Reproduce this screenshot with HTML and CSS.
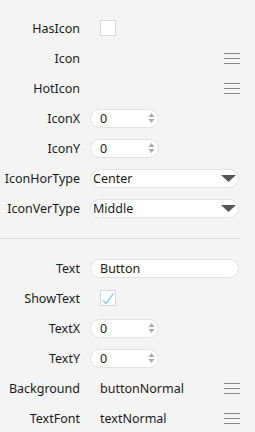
FILE: index.html
```html
<!DOCTYPE html>
<html>
<head>
<meta charset="utf-8">
<link rel="stylesheet" href="styles.css">
</head>
<body>
<div class="panel">
  <div class="row"><span class="label">HasIcon</span><span class="check"></span></div>
  <div class="row"><span class="label">Icon</span><span class="value"></span><span class="menu"><i></i><i></i><i></i></span></div>
  <div class="row"><span class="label">HotIcon</span><span class="value"></span><span class="menu"><i></i><i></i><i></i></span></div>
  <div class="row"><span class="label">IconX</span><span class="spin"><span class="txt">0</span><svg class="arrows" width="7" height="12" viewBox="0 0 7 12"><path d="M3.5 1 L6.5 5 H0.5 Z M3.5 11 L6.5 7 H0.5 Z" fill="#aaa"/></svg></span></div>
  <div class="row"><span class="label">IconY</span><span class="spin"><span class="txt">0</span><svg class="arrows" width="7" height="12" viewBox="0 0 7 12"><path d="M3.5 1 L6.5 5 H0.5 Z M3.5 11 L6.5 7 H0.5 Z" fill="#aaa"/></svg></span></div>
  <div class="row"><span class="label">IconHorType</span><span class="select"><span class="txt">Center</span><svg class="tri" width="15" height="7" viewBox="0 0 15 7"><path d="M0 0 H15 L7.5 7 Z" fill="#555"/></svg></span></div>
  <div class="row"><span class="label">IconVerType</span><span class="select"><span class="txt">Middle</span><svg class="tri" width="15" height="7" viewBox="0 0 15 7"><path d="M0 0 H15 L7.5 7 Z" fill="#555"/></svg></span></div>
  <div class="sep"><hr></div>
  <div class="row"><span class="label">Text</span><span class="input"><span class="txt">Button</span></span></div>
  <div class="row"><span class="label">ShowText</span><span class="check"><svg width="14" height="14" viewBox="0 0 14 14"><path d="M2 9.5 L5 12.5 L12.5 2.5" fill="none" stroke="#8fd0f5" stroke-width="1.6"/></svg></span></div>
  <div class="row"><span class="label">TextX</span><span class="spin"><span class="txt">0</span><svg class="arrows" width="7" height="12" viewBox="0 0 7 12"><path d="M3.5 1 L6.5 5 H0.5 Z M3.5 11 L6.5 7 H0.5 Z" fill="#aaa"/></svg></span></div>
  <div class="row"><span class="label">TextY</span><span class="spin"><span class="txt">0</span><svg class="arrows" width="7" height="12" viewBox="0 0 7 12"><path d="M3.5 1 L6.5 5 H0.5 Z M3.5 11 L6.5 7 H0.5 Z" fill="#aaa"/></svg></span></div>
  <div class="row"><span class="label">Background</span><span class="value">buttonNormal</span><span class="menu"><i></i><i></i><i></i></span></div>
  <div class="row"><span class="label">TextFont</span><span class="value">textNormal</span><span class="menu"><i></i><i></i><i></i></span></div>
</div>
</body>
</html>
```
FILE: styles.css
```css
html, body {
  margin: 0;
  padding: 0;
  background: #f4f4f4;
}
body {
  font-family: "Noto Sans", "Open Sans", sans-serif;
  font-size: 12.5px;
  color: #1a1a1a;
  width: 255px;
  height: 432px;
  overflow: hidden;
}
.panel {
  padding-top: 13px;
  width: 240px;
}
.row {
  display: flex;
  align-items: center;
  height: 30px;
}
.label {
  width: 80px;
  text-align: right;
  margin-right: 10px;
  flex: none;
  white-space: nowrap;
}
.check {
  margin-left: 10px;
  width: 14px;
  height: 14px;
  border: 1px solid #d8d8d8;
  background: #fff;
  display: flex;
  align-items: center;
  justify-content: center;
}
.value {
  flex: 1;
  padding-left: 10px;
}
.menu {
  width: 16px;
  height: 11px;
  display: flex;
  flex-direction: column;
  justify-content: space-between;
}
.menu i {
  display: block;
  height: 1px;
  background: #888;
}
.spin, .select, .input {
  box-sizing: border-box;
  height: 19px;
  background: #fff;
  border: 1px solid #e2e2e2;
  border-radius: 10px;
  display: flex;
  align-items: center;
}
.spin {
  width: 69px;
  padding: 0 3px 0 9px;
}
.spin .txt, .select .txt, .input .txt {
  flex: 1;
}
.select {
  width: 149px;
  padding: 0 2px 0 2px;
}
.input {
  width: 149px;
  padding-left: 9px;
}
.sep {
  height: 30px;
  display: flex;
  align-items: center;
}
.sep hr {
  width: 240px;
  margin: 0;
  border: 0;
  height: 1px;
  background: #dcdcdc;
}
```
